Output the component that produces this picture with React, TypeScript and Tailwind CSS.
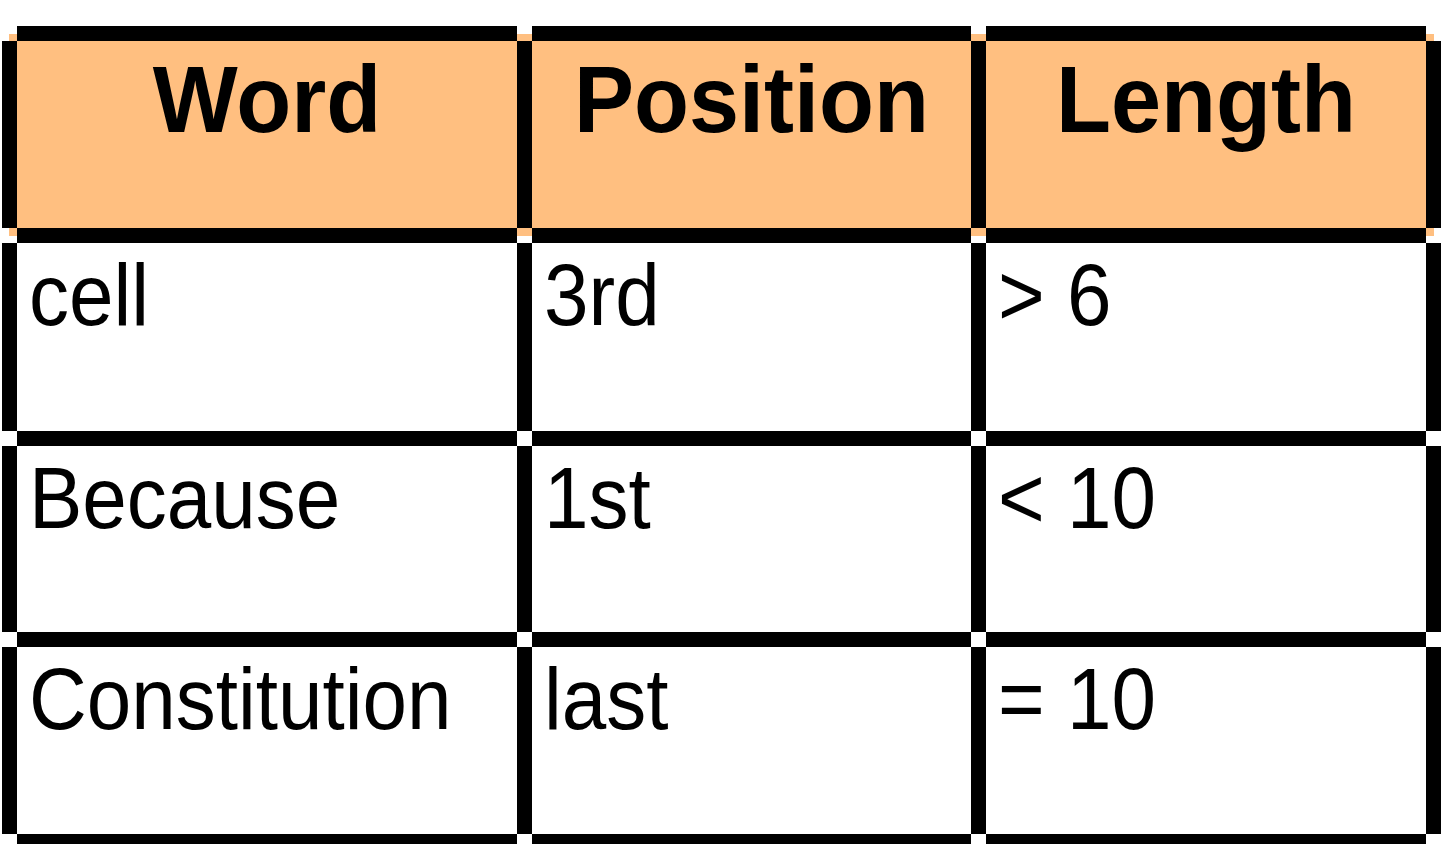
const colStart = ["col-start-1", "col-start-2", "col-start-3", "col-start-4", "col-start-5", "col-start-6", "col-start-7"];
const rowStart = ["row-start-1", "row-start-2", "row-start-3", "row-start-4", "row-start-5", "row-start-6", "row-start-7", "row-start-8", "row-start-9"];

const header = ["Word", "Position", "Length"];
const rows = [
  ["cell", "3rd", "> 6"],
  ["Because", "1st", "< 10"],
  ["Constitution", "last", "= 10"],
];

export default function App() {
  const all = [header, ...rows];

  return (
    <div className="min-h-[844px] w-[1444px] overflow-hidden bg-white font-['Liberation_Sans',Arial,sans-serif] text-black">
      <div className="ml-[2px] mt-[26px] grid grid-cols-[15px_500px_15px_439px_15px_440px_15px] grid-rows-[15px_187px_15px_188px_15px_186px_15px_187px_15px]">
        {/* header background, offset half a border */}
        <div className="col-start-1 col-end-8 row-start-1 row-end-4 mb-[7px] ml-[7px] mr-[7px] mt-[8px] bg-[#ffbf80]" />

        {/* horizontal rules: one segment per cell, corners left open */}
        {[0, 2, 4, 6, 8].map((r) =>
          [1, 3, 5].map((c) => (
            <div key={`h${r}-${c}`} className={`${rowStart[r]} ${colStart[c]} bg-black`} />
          ))
        )}

        {/* vertical rules */}
        {[1, 3, 5, 7].map((r) =>
          [0, 2, 4, 6].map((c) => (
            <div key={`v${r}-${c}`} className={`${rowStart[r]} ${colStart[c]} bg-black`} />
          ))
        )}

        {/* cells */}
        {all.map((row, i) =>
          row.map((text, j) =>
            i === 0 ? (
              <div
                key={`c${i}-${j}`}
                className={`${rowStart[1]} ${colStart[j * 2 + 1]} pt-[16px] text-center text-[90px] font-bold leading-none`}
              >
                <span className="inline-block origin-bottom scale-y-[1.055]">{text}</span>
              </div>
            ) : (
              <div
                key={`c${i}-${j}`}
                className={`${rowStart[i * 2 + 1]} ${colStart[j * 2 + 1]} pl-[12px] pt-[16px] text-[80px] leading-none`}
              >
                <span className="inline-block origin-bottom scale-y-[1.08]">{text}</span>
              </div>
            )
          )
        )}
      </div>
    </div>
  );
}
